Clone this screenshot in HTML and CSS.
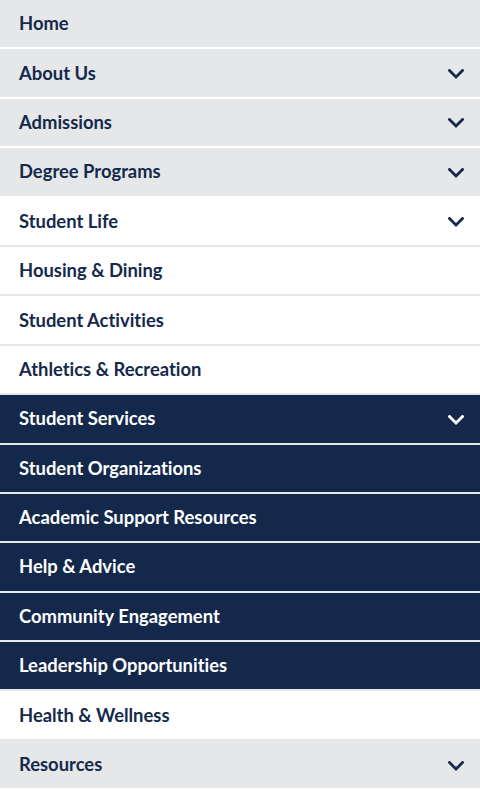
FILE: index.html
```html
<!DOCTYPE html>
<html lang="en">
<head>
<meta charset="utf-8">
<title>Menu</title>
<link rel="stylesheet" href="styles.css">
</head>
<body>
<nav class="menu">
  <a class="item gray" href="#"><span>Home</span></a>
  <a class="item gray" href="#"><span>About Us</span><svg class="chev" viewBox="0 0 16 10"><path d="M1.5 1.5 L8 8 L14.5 1.5"/></svg></a>
  <a class="item gray" href="#"><span>Admissions</span><svg class="chev" viewBox="0 0 16 10"><path d="M1.5 1.5 L8 8 L14.5 1.5"/></svg></a>
  <a class="item gray" href="#"><span>Degree Programs</span><svg class="chev" viewBox="0 0 16 10"><path d="M1.5 1.5 L8 8 L14.5 1.5"/></svg></a>
  <a class="item white" href="#"><span>Student Life</span><svg class="chev" viewBox="0 0 16 10"><path d="M1.5 1.5 L8 8 L14.5 1.5"/></svg></a>
  <a class="item white" href="#"><span>Housing &amp; Dining</span></a>
  <a class="item white" href="#"><span>Student Activities</span></a>
  <a class="item white" href="#"><span>Athletics &amp; Recreation</span></a>
  <a class="item navy" href="#"><span>Student Services</span><svg class="chev" viewBox="0 0 16 10"><path d="M1.5 1.5 L8 8 L14.5 1.5"/></svg></a>
  <a class="item navy" href="#"><span>Student Organizations</span></a>
  <a class="item navy" href="#"><span>Academic Support Resources</span></a>
  <a class="item navy" href="#"><span>Help &amp; Advice</span></a>
  <a class="item navy" href="#"><span>Community Engagement</span></a>
  <a class="item navy" href="#"><span>Leadership Opportunities</span></a>
  <a class="item white" href="#"><span>Health &amp; Wellness</span></a>
  <a class="item gray" href="#"><span>Resources</span><svg class="chev" viewBox="0 0 16 10"><path d="M1.5 1.5 L8 8 L14.5 1.5"/></svg></a>
</nav>
</body>
</html>
```
FILE: styles.css
```css
html, body {
  margin: 0;
  padding: 0;
  background: #ffffff;
}
body {
  font-family: Lato, "Liberation Sans", sans-serif;
  width: 480px;
  overflow: hidden;
}
.menu {
  display: flex;
  flex-direction: column;
}
.item {
  display: flex;
  align-items: center;
  justify-content: space-between;
  box-sizing: border-box;
  height: 49.4px;
  padding: 0 16px 1px 19px;
  border-bottom: 2px solid #ffffff;
  font-size: 18.4px;
  font-weight: 700;
  font-variant-ligatures: none;
  text-decoration: none;
  color: #14294b;
}
.item.gray {
  background: #e6e7e9;
  border-bottom-color: #ffffff;
}
.item.white {
  background: #ffffff;
  border-bottom-color: #e6e7e9;
}
.item.navy {
  background: #14284b;
  color: #ffffff;
  border-bottom-color: #e6e7e9;
}
.chev {
  width: 16px;
  height: 10px;
  margin-top: 3px;
  fill: none;
  stroke: currentColor;
  stroke-width: 2.8;
  stroke-linecap: square;
  stroke-linejoin: miter;
}
```
